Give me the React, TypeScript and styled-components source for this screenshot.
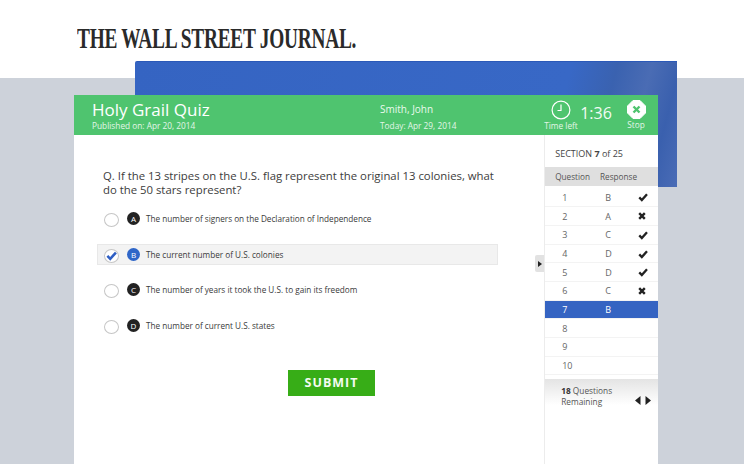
import React from "react";
import styled, { createGlobalStyle } from "styled-components";

const GlobalStyle = createGlobalStyle`
  html, body {
    margin: 0;
    padding: 0;
    background: #fff;
    font-family: "Open Sans", "Liberation Sans", sans-serif;
  }
`;

const answers = [
  { n: 1, a: "B", ok: true },
  { n: 2, a: "A", ok: false },
  { n: 3, a: "C", ok: true },
  { n: 4, a: "D", ok: true },
  { n: 5, a: "D", ok: true },
  { n: 6, a: "C", ok: false },
  { n: 7, a: "B", current: true },
  { n: 8 },
  { n: 9 },
  { n: 10 },
];

const options = [
  { letter: "A", text: "The number of signers on the Declaration of Independence" },
  { letter: "B", text: "The current number of U.S. colonies", selected: true },
  { letter: "C", text: "The number of years it took the U.S. to gain its freedom" },
  { letter: "D", text: "The number of current U.S. states" },
];

const CheckIcon = ({ color = "#222", size = 10 }: { color?: string; size?: number }) => (
  <svg width={size} height={size} viewBox="0 0 12 12">
    <path d="M1.5 6.5 L4.6 9.6 L10.8 2.8" fill="none" stroke={color} strokeWidth="2.8" />
  </svg>
);

const CrossIcon = () => (
  <svg width="8" height="8" viewBox="0 0 10 10">
    <path d="M1.5 1.5 L8.5 8.5 M8.5 1.5 L1.5 8.5" fill="none" stroke="#222" strokeWidth="3" />
  </svg>
);

const ClockIcon = () => (
  <svg width="20" height="20" viewBox="0 0 20 20">
    <circle cx="10" cy="10" r="8.9" fill="none" stroke="#fff" strokeWidth="1.2" />
    <path d="M10 4.5 V10.5 H6.5" fill="none" stroke="#fff" strokeWidth="1.2" />
  </svg>
);

const StopIcon = () => (
  <svg width="19" height="19" viewBox="0 0 19 19">
    <path d="M6 0.5 H13 L18.5 6 V13 L13 18.5 H6 L0.5 13 V6 Z" fill="#fff" stroke="#fff" strokeLinejoin="round" />
    <path d="M6.5 6.5 L12.5 12.5 M12.5 6.5 L6.5 12.5" fill="none" stroke="#4fc46f" strokeWidth="2.4" />
  </svg>
);

const App = () => {
  return (
    <Page>
      <GlobalStyle />
      <Masthead>
        <Logo>THE WALL STREET JOURNAL.</Logo>
      </Masthead>
      <Stage>
        <BluePanel />
        <Card>
          <QuizBar>
            <TitleBlock>
              <QuizTitle>Holy Grail Quiz</QuizTitle>
              <BarCaption>Published on: Apr 20, 2014</BarCaption>
            </TitleBlock>
            <UserBlock>
              <UserName>Smith, John</UserName>
              <BarCaption>Today: Apr 29, 2014</BarCaption>
            </UserBlock>
            <BarTool>
              <ClockIcon />
              <BarCaption>Time left</BarCaption>
            </BarTool>
            <Timer>1:36</Timer>
            <BarTool $wide>
              <StopIcon />
              <BarCaption>Stop</BarCaption>
            </BarTool>
          </QuizBar>
          <CardBody>
            <Main>
              <Question>
                Q. If the 13 stripes on the U.S. flag represent the original 13 colonies, what do the 50 stars represent?
              </Question>
              <OptionList>
                {options.map((o) => (
                  <Option key={o.letter} $selected={o.selected}>
                    <Radio>{o.selected && <CheckIcon color="#2f5fc4" size={11} />}</Radio>
                    <Letter $selected={o.selected}>{o.letter}</Letter>
                    <OptionText>{o.text}</OptionText>
                  </Option>
                ))}
              </OptionList>
              <SubmitButton>SUBMIT</SubmitButton>
              <Handle>
                <svg width="4" height="6" viewBox="0 0 4 6">
                  <path d="M0 0 L4 3 L0 6 Z" fill="#222" />
                </svg>
              </Handle>
            </Main>
            <Sidebar>
              <SectionLabel>
                SECTION <b>7</b> of 25
              </SectionLabel>
              <TableHead>
                <span>Question</span>
                <span>Response</span>
              </TableHead>
              <Rows>
                {answers.map((r) => (
                  <Row key={r.n} $current={r.current}>
                    <RowNum>{r.n}</RowNum>
                    <RowAnswer>{r.a}</RowAnswer>
                    <RowMark>
                      {r.ok === true && <CheckIcon />}
                      {r.ok === false && <CrossIcon />}
                    </RowMark>
                  </Row>
                ))}
              </Rows>
              <Remaining>
                <RemainingText>
                  <b>18</b> Questions Remaining
                </RemainingText>
                <Arrows>
                  <svg width="16" height="9" viewBox="0 0 16 9">
                    <path d="M5.5 0 V9 L0 4.5 Z M10.5 0 V9 L16 4.5 Z" fill="#222" />
                  </svg>
                </Arrows>
              </Remaining>
            </Sidebar>
          </CardBody>
        </Card>
      </Stage>
    </Page>
  );
};

const Page = styled.div`
  width: 744px;
  height: 464px;
  overflow: hidden;
`;

const Masthead = styled.header`
  height: 78px;
  padding: 23px 0 0 77px;
  box-sizing: border-box;
  background: #fff;
`;

const Logo = styled.div`
  font-family: "Liberation Serif", serif;
  font-weight: bold;
  font-size: 30px;
  line-height: 30px;
  color: #2a2a2a;
  white-space: nowrap;
  letter-spacing: -0.4px;
  transform: scaleX(0.645);
  transform-origin: left center;
`;

const Stage = styled.div`
  position: relative;
  height: 386px;
  padding: 17px 0 0 74px;
  box-sizing: border-box;
  background: #cdd2da;
`;

/* sits behind the card and pokes up into the white masthead */
const BluePanel = styled.div`
  position: absolute;
  left: 135px;
  top: -17px;
  width: 542px;
  height: 126px;
  box-sizing: border-box;
  border-top: 1px solid #2b59b8;
  border-radius: 2px 0 0 0;
  background: linear-gradient(
    105deg,
    #3564c2 0%,
    #3868c6 76%,
    #3a62b0 84%,
    #4a6cb4 90%,
    #3a60ae 95%,
    #4a6cb6 100%
  );
`;

const Card = styled.div`
  position: relative;
  width: 584px;
  height: 369px;
  background: #fff;
`;

const QuizBar = styled.div`
  height: 40px;
  display: flex;
  align-items: stretch;
  background: #4fc46f;
  color: #fff;
`;

const TitleBlock = styled.div`
  width: 288px;
  padding: 5px 0 0 18px;
  box-sizing: border-box;
`;

const QuizTitle = styled.div`
  font-size: 17px;
  line-height: 20px;
  margin-bottom: 1px;
`;

const BarCaption = styled.div`
  font-size: 8.3px;
  line-height: 10px;
  color: #e3f6e8;
  white-space: nowrap;
`;

const UserBlock = styled.div`
  width: 182px;
  padding: 7px 0 0 18px;
  box-sizing: border-box;
`;

const UserName = styled.div`
  font-size: 10px;
  line-height: 14px;
  margin-bottom: 5px;
  color: #eafaee;
`;

const BarTool = styled.div<{ $wide?: boolean }>`
  display: flex;
  flex-direction: column;
  align-items: center;
  justify-content: flex-start;
  gap: 1px;
  padding-top: 5px;
  width: ${(p) => (p.$wide ? "44px" : "34px")};
`;

const Timer = styled.div`
  width: 36px;
  padding-top: 8px;
  font-size: 16px;
  line-height: 20px;
  text-align: center;
  color: #f2fbf4;
`;

const CardBody = styled.div`
  display: flex;
  height: 329px;
`;

const Main = styled.main`
  position: relative;
  width: 471px;
  padding: 34px 0 0 23px;
  box-sizing: border-box;
`;

const Question = styled.p`
  margin: 0 0 0 6px;
  width: 405px;
  font-size: 11.35px;
  line-height: 14px;
  color: #3c3c3c;
`;

const OptionList = styled.div`
  display: flex;
  flex-direction: column;
  gap: 14.6px;
  margin-top: 11px;
`;

const Option = styled.div<{ $selected?: boolean }>`
  display: flex;
  align-items: center;
  width: 401px;
  height: 21px;
  box-sizing: border-box;
  padding-left: 6px;
  background: ${(p) => (p.$selected ? "#f3f3f3" : "transparent")};
  border: 1px solid ${(p) => (p.$selected ? "#e8e8e8" : "transparent")};
`;

const Radio = styled.span`
  display: flex;
  align-items: center;
  justify-content: center;
  width: 13px;
  height: 12px;
  margin: 3px 8px 0 0;
  border-radius: 50%;
  background: #fff;
  border: 1px solid #c6c6c6;
  box-sizing: content-box;
  flex: none;
`;

const Letter = styled.span<{ $selected?: boolean }>`
  display: flex;
  align-items: center;
  justify-content: center;
  width: 13px;
  height: 13px;
  margin-right: 6px;
  border-radius: 50%;
  font-size: 8px;
  color: #fff;
  background: ${(p) => (p.$selected ? "#2f66c8" : "#222")};
  flex: none;
`;

const OptionText = styled.span`
  font-size: 8.2px;
  color: #3a3a3a;
  white-space: nowrap;
`;

const SubmitButton = styled.button`
  display: block;
  width: 87px;
  height: 26px;
  margin: 34px 0 0 191px;
  padding: 0;
  border: none;
  background: #37ad17;
  color: #f4fbf2;
  font-family: "Open Sans", sans-serif;
  font-weight: 700;
  font-size: 12.5px;
  letter-spacing: 1px;
`;

const Handle = styled.div`
  position: absolute;
  right: 0;
  top: 120px;
  width: 9px;
  height: 17px;
  display: flex;
  align-items: center;
  justify-content: center;
  background: #e2e2e2;
  border-radius: 2px 0 0 2px;
`;

const Sidebar = styled.aside`
  width: 113px;
  border-left: 1px solid #ececec;
  color: #555;
`;

const SectionLabel = styled.div`
  height: 32px;
  padding: 12px 0 0 10px;
  box-sizing: border-box;
  font-size: 9px;
  line-height: 14px;
  color: #444;
`;

const TableHead = styled.div`
  display: flex;
  gap: 10px;
  height: 19px;
  align-items: center;
  padding-left: 10px;
  background: #dfdfdf;
  font-size: 8.2px;
  color: #555;
`;

const Rows = styled.div`
  padding: 2.6px 0 3.4px;
`;

const Row = styled.div<{ $current?: boolean }>`
  display: flex;
  align-items: center;
  height: 18.7px;
  font-size: 9px;
  box-sizing: border-box;
  border-bottom: 1px solid #f3f3f3;
  background: ${(p) => (p.$current ? "#3564c2" : "#fff")};
  color: ${(p) => (p.$current ? "#fff" : "#666")};
`;

const RowNum = styled.span`
  width: 60px;
  padding-left: 17px;
  box-sizing: border-box;
`;

const RowAnswer = styled.span`
  width: 33px;
`;

const RowMark = styled.span`
  display: flex;
  align-items: center;
`;

const Remaining = styled.div`
  display: flex;
  justify-content: space-between;
  padding: 6px 7px 0 16px;
  height: 40px;
  box-sizing: border-box;
  background: linear-gradient(#e4e4e4, #fff 26px);
`;

const RemainingText = styled.div`
  width: 62px;
  font-size: 8.3px;
  line-height: 11px;
  color: #555;
  b {
    color: #333;
  }
`;

const Arrows = styled.div`
  padding-top: 3px;
`;

export default App;
